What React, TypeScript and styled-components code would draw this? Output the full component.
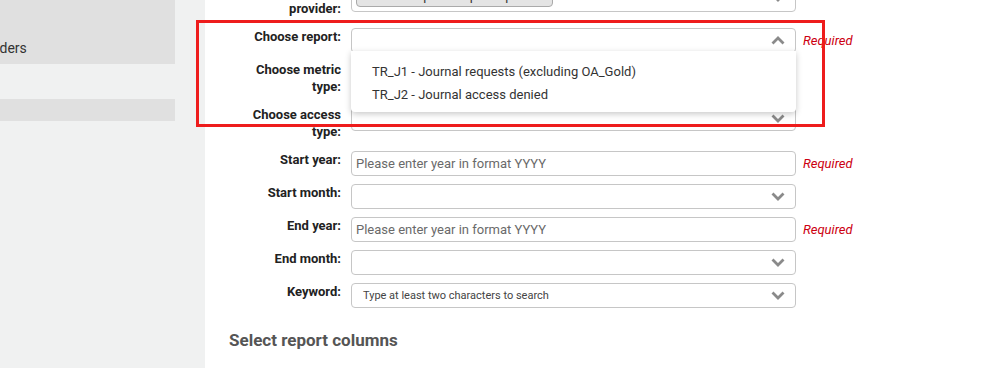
import styled, { createGlobalStyle } from 'styled-components'

const GlobalStyle = createGlobalStyle`
  html, body {
    margin: 0;
    padding: 0;
    background: #ffffff;
  }
  body {
    font-family: Roboto, 'Liberation Sans', Arial, sans-serif;
    color: #222;
  }
`

const Page = styled.div`
  position: relative;
  display: flex;
  width: 997px;
  height: 368px;
  overflow: hidden;
`

const Sidebar = styled.aside`
  flex: 0 0 205px;
  background-color: #f0f1f1;
  overflow: hidden;
`

const SideItem = styled.div<{ $height: number; $gap: number }>`
  width: 175px;
  height: ${(p) => p.$height}px;
  margin-bottom: ${(p) => p.$gap}px;
  background-color: #e0e0e0;
  display: flex;
  align-items: flex-end;
  padding-bottom: 8px;
  box-sizing: border-box;
  font-size: 14px;
  color: #333;
  white-space: nowrap;
`

const SideLabel = styled.span`
  margin-left: -32px;
`

const Main = styled.main`
  flex: 1;
  padding: 0 24px;
`

const Form = styled.div`
  margin-top: -17px;
  display: flex;
  flex-direction: column;
  gap: 8px;
`

const Row = styled.div`
  display: flex;
  align-items: flex-start;
  gap: 10px;
`

const Label = styled.label`
  width: 112px;
  flex: 0 0 112px;
  text-align: right;
  font-weight: 700;
  font-size: 13px;
  line-height: 17px;
  padding-bottom: 3px;
  color: #222;
`

const FieldWrap = styled.div`
  position: relative;
  width: 445px;
  flex: 0 0 445px;
`

const Field = styled.div<{ $tall?: boolean }>`
  height: ${(p) => (p.$tall ? 29 : 25)}px;
  box-sizing: border-box;
  border: 1px solid #c6c6c6;
  border-radius: 4px;
  background: #fff;
  display: flex;
  align-items: center;
  padding: 0 4px;
`

const Placeholder = styled.span<{ $small?: boolean }>`
  font-size: ${(p) => (p.$small ? 11 : 13)}px;
  color: ${(p) => (p.$small ? '#444' : '#6a6a6a')};
  padding-left: ${(p) => (p.$small ? 7 : 0)}px;
  flex: 1;
`

const Spacer = styled.span`
  flex: 1;
`

const Tag = styled.span`
  display: inline-flex;
  align-items: center;
  gap: 4px;
  height: 20px;
  margin-top: -4px;
  padding: 0 5px;
  border: 1px solid #aaa;
  border-radius: 4px;
  background: #e4e4e4;
  font-size: 13px;
  color: #333;
`

const TagClose = styled.span`
  color: #999;
  font-weight: 700;
`

const Chevron = styled.svg`
  flex: 0 0 auto;
  margin-right: 6px;
`

const Required = styled.span`
  font-size: 13px;
  font-style: italic;
  color: #cc0010;
  line-height: 25px;
  margin-left: -3px;
`

const Menu = styled.ul`
  position: absolute;
  top: 23px;
  left: 0;
  right: 0;
  margin: 0;
  padding: 9px 0 6px;
  list-style: none;
  background: #fff;
  border-radius: 0 0 4px 4px;
  box-shadow: 0 2px 6px rgba(0, 0, 0, 0.22);
  z-index: 2;
`

const MenuItem = styled.li`
  padding: 0 21px;
  font-size: 13px;
  line-height: 23px;
  color: #333;
`

const SectionTitle = styled.h3`
  margin: 22px 0 0;
  font-size: 17px;
  line-height: 20px;
  font-weight: 700;
  color: #555;
`

const Highlight = styled.div`
  position: absolute;
  left: 196px;
  top: 20px;
  width: 629px;
  height: 107px;
  box-sizing: border-box;
  border: 3px solid #ee1c1c;
  pointer-events: none;
  z-index: 3;
`

const Arrow = ({ up = false }: { up?: boolean }) => (
  <Chevron width="14" height="9" viewBox="0 0 14 9">
    <polyline
      points={up ? '1.5,7.5 7,2 12.5,7.5' : '1.5,1.5 7,7 12.5,1.5'}
      fill="none"
      stroke="#8a8a8a"
      strokeWidth="2.8"
    />
  </Chevron>
)

const App = () => {
  return (
    <>
      <GlobalStyle />
      <Page>
        <Sidebar>
          <SideItem $height={64} $gap={35}>
            <SideLabel>Providers</SideLabel>
          </SideItem>
          <SideItem $height={22} $gap={0} />
        </Sidebar>
        <Main>
          <Form>
            <Row>
              <Label>Choose data provider:</Label>
              <FieldWrap>
                <Field $tall>
                  <Tag>
                    PTPS Europe Multiple Reports <TagClose>×</TagClose>
                  </Tag>
                  <Spacer />
                  <Arrow />
                </Field>
              </FieldWrap>
            </Row>
            <Row>
              <Label>Choose report:</Label>
              <FieldWrap>
                <Field>
                  <Spacer />
                  <Arrow up />
                </Field>
                <Menu>
                  <MenuItem>TR_J1 - Journal requests (excluding OA_Gold)</MenuItem>
                  <MenuItem>TR_J2 - Journal access denied</MenuItem>
                </Menu>
              </FieldWrap>
              <Required>Required</Required>
            </Row>
            <Row>
              <Label>Choose metric type:</Label>
              <FieldWrap>
                <Field>
                  <Spacer />
                  <Arrow />
                </Field>
              </FieldWrap>
            </Row>
            <Row>
              <Label>Choose access type:</Label>
              <FieldWrap>
                <Field>
                  <Spacer />
                  <Arrow />
                </Field>
              </FieldWrap>
            </Row>
            <Row>
              <Label>Start year:</Label>
              <FieldWrap>
                <Field>
                  <Placeholder>Please enter year in format YYYY</Placeholder>
                </Field>
              </FieldWrap>
              <Required>Required</Required>
            </Row>
            <Row>
              <Label>Start month:</Label>
              <FieldWrap>
                <Field>
                  <Spacer />
                  <Arrow />
                </Field>
              </FieldWrap>
            </Row>
            <Row>
              <Label>End year:</Label>
              <FieldWrap>
                <Field>
                  <Placeholder>Please enter year in format YYYY</Placeholder>
                </Field>
              </FieldWrap>
              <Required>Required</Required>
            </Row>
            <Row>
              <Label>End month:</Label>
              <FieldWrap>
                <Field>
                  <Spacer />
                  <Arrow />
                </Field>
              </FieldWrap>
            </Row>
            <Row>
              <Label>Keyword:</Label>
              <FieldWrap>
                <Field>
                  <Placeholder $small>Type at least two characters to search</Placeholder>
                  <Arrow />
                </Field>
              </FieldWrap>
            </Row>
          </Form>
          <SectionTitle>Select report columns</SectionTitle>
        </Main>
        <Highlight />
      </Page>
    </>
  )
}

export default App
